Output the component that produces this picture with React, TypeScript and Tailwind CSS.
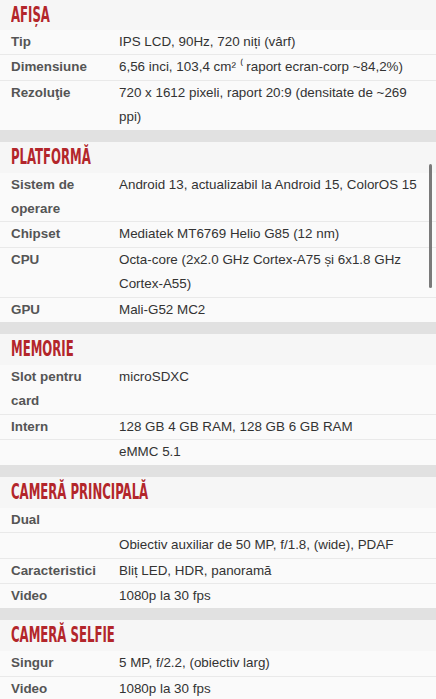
type Row = { label?: string; value: string }
type Section = { title: string; rows: Row[] }

const sections: Section[] = [
  {
    title: 'AFIȘA',
    rows: [
      { label: 'Tip', value: 'IPS LCD, 90Hz, 720 niți (vârf)' },
      { label: 'Dimensiune', value: '6,56 inci, 103,4 cm² ⁽ raport ecran-corp ~84,2%)' },
      { label: 'Rezoluţie', value: '720 x 1612 pixeli, raport 20:9 (densitate de ~269 ppi)' },
    ],
  },
  {
    title: 'PLATFORMĂ',
    rows: [
      { label: 'Sistem de operare', value: 'Android 13, actualizabil la Android 15, ColorOS 15' },
      { label: 'Chipset', value: 'Mediatek MT6769 Helio G85 (12 nm)' },
      { label: 'CPU', value: 'Octa-core (2x2.0 GHz Cortex-A75 și 6x1.8 GHz Cortex-A55)' },
      { label: 'GPU', value: 'Mali-G52 MC2' },
    ],
  },
  {
    title: 'MEMORIE',
    rows: [
      { label: 'Slot pentru card', value: 'microSDXC' },
      { label: 'Intern', value: '128 GB 4 GB RAM, 128 GB 6 GB RAM' },
      { value: 'eMMC 5.1' },
    ],
  },
  {
    title: 'CAMERĂ PRINCIPALĂ',
    rows: [
      { label: 'Dual', value: '' },
      { value: 'Obiectiv auxiliar de 50 MP, f/1.8, (wide), PDAF' },
      { label: 'Caracteristici', value: 'Bliț LED, HDR, panoramă' },
      { label: 'Video', value: '1080p la 30 fps' },
    ],
  },
  {
    title: 'CAMERĂ SELFIE',
    rows: [
      { label: 'Singur', value: '5 MP, f/2.2, (obiectiv larg)' },
      { label: 'Video', value: '1080p la 30 fps' },
    ],
  },
]

function SpecSection({ section, first }: { section: Section; first: boolean }) {
  return (
    <div>
      {!first && <div className="h-[12px] bg-[#e1e1e1]" />}
      <div className={`${first ? 'h-[30px]' : 'h-[31px]'} flex items-center px-[11px] bg-[#f6f6f6]`}>
        <span
          className="text-[21px] font-bold leading-none text-[#b3262b] origin-left scale-x-[0.62] whitespace-nowrap"
          style={{ fontFamily: '"Liberation Sans Narrow", "DejaVu Sans Condensed", "Liberation Sans", sans-serif' }}
        >
          {section.title}
        </span>
      </div>
      {section.rows.map((r, i) => (
        <div
          key={i}
          className={`flex bg-[#fafafa] text-[13.4px] leading-[24.4px] ${i < section.rows.length - 1 ? 'border-b border-[#e9e9e9]' : ''}`}
        >
          <div className="w-[119px] shrink-0 pl-[11px] pr-2 font-bold text-[#555555]">{r.label}</div>
          <div className="flex-1 pr-3 text-[#333333]">{r.value}</div>
        </div>
      ))}
    </div>
  )
}

export default function App() {
  return (
    <div
      className="relative w-[436px] h-[699px] overflow-hidden bg-[#fafafa]"
      style={{ fontFamily: '"Liberation Sans", Arial, sans-serif' }}
    >
      {sections.map((s, i) => (
        <SpecSection key={s.title} section={s} first={i === 0} />
      ))}
      <div className="absolute right-[4px] top-[164px] w-[3px] h-[124px] rounded-full bg-[#7a7a7a]" />
    </div>
  )
}
